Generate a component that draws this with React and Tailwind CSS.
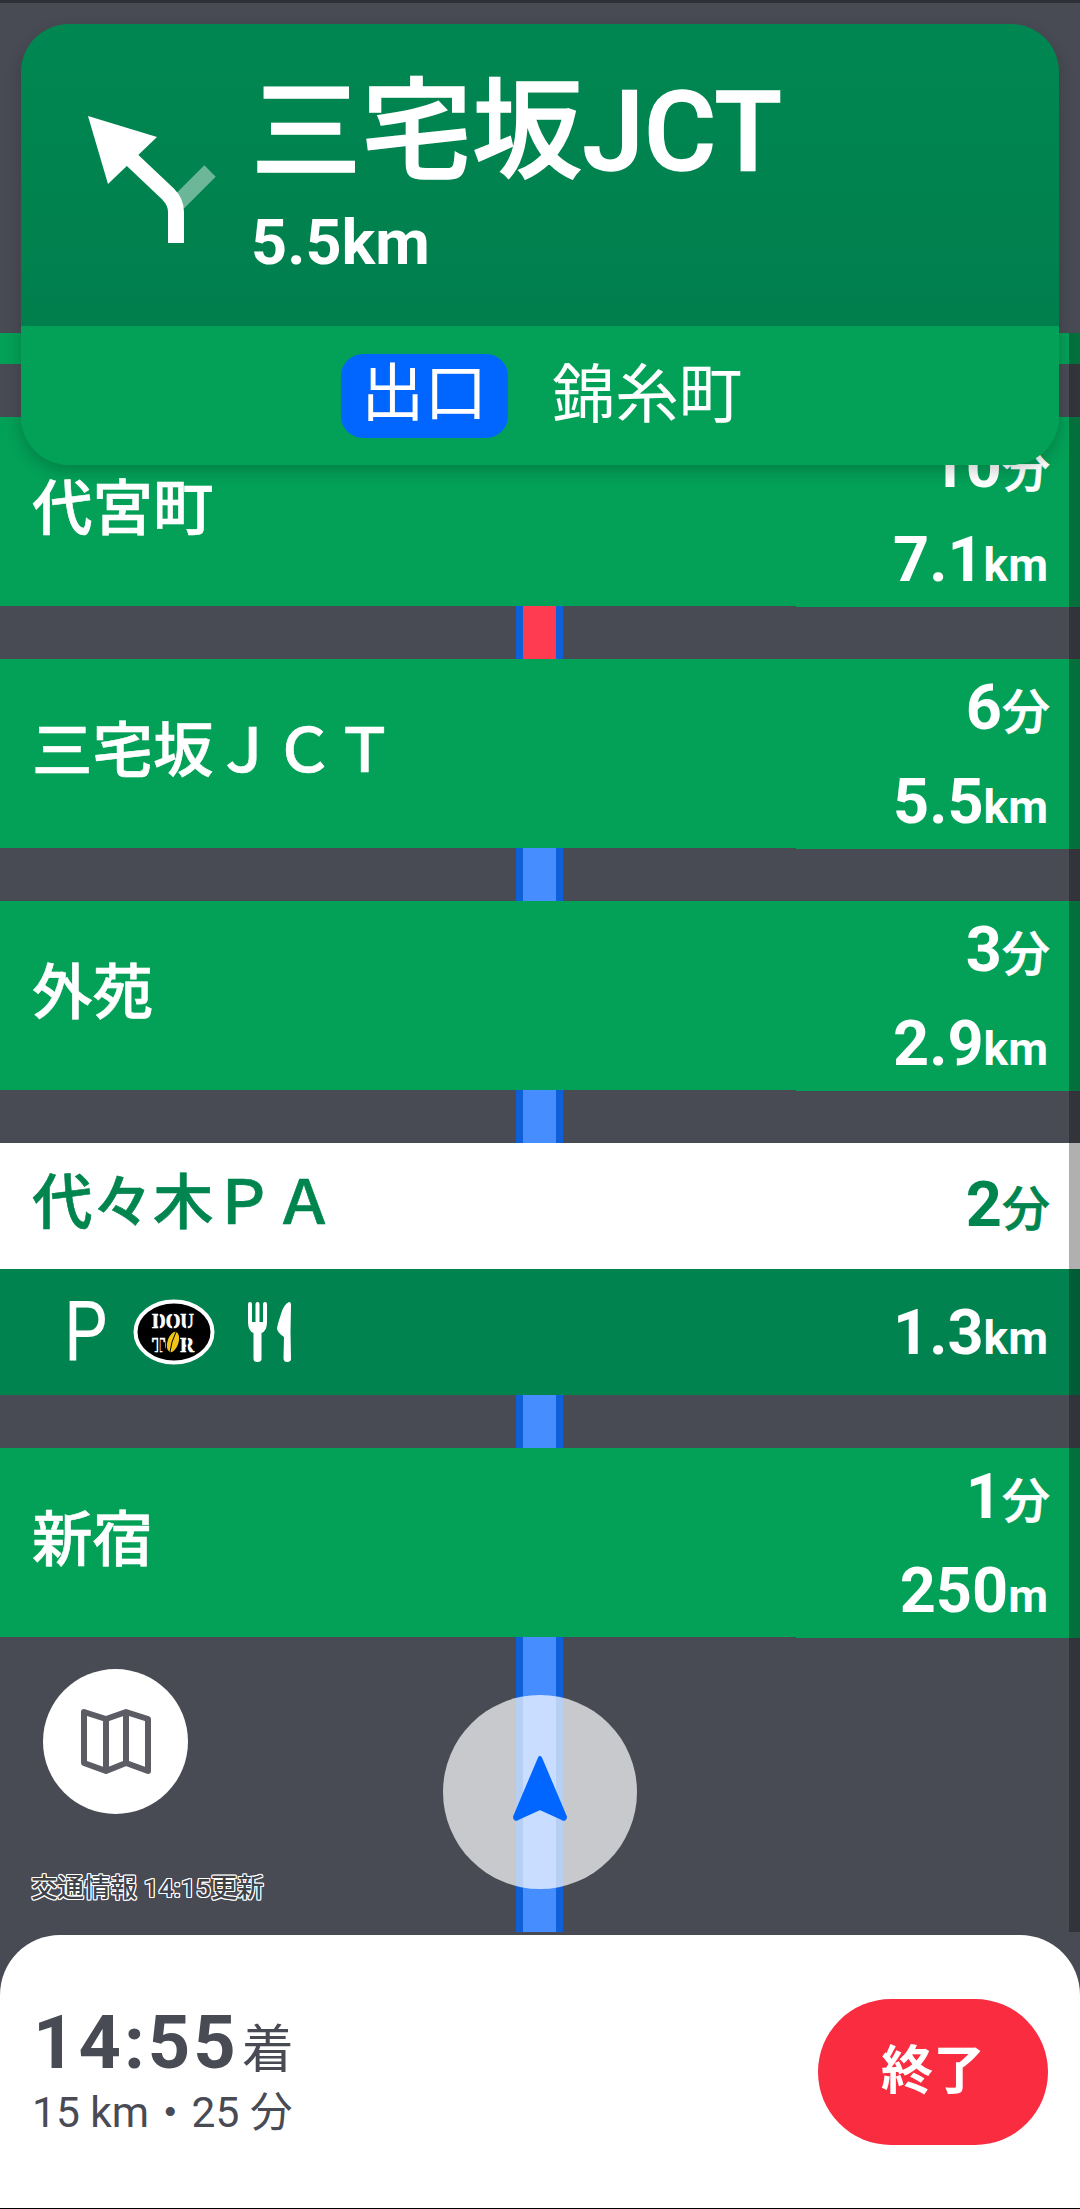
const FONT = 'font-[Roboto,"Noto_Sans_CJK_JP",sans-serif]';

function Road({ color = 'bg-[#468dff]', grow = false }) {
  return (
    <div className={`flex justify-center ${grow ? 'flex-1' : 'h-[53px]'}`}>
      <div className={`ml-[-1px] w-[47px] border-x-[7px] border-[#0f5fd8] ${color}`} />
    </div>
  );
}

function Amount({ value, unit, small }) {
  return (
    <div className="flex items-baseline justify-end leading-none text-white font-bold">
      <span className="text-[63px]">{value}</span>
      <span className={small ? 'mr-[-2px] text-[48px] font-medium [-webkit-text-stroke:0.6px_#fff]' : 'text-[46px]'}>{unit}</span>
    </div>
  );
}

function Row({ name, min, dist, unit = 'km' }) {
  return (
    <div className="flex h-[189px] shrink-0 bg-[#03a058]">
      <div className="flex flex-1 items-center pb-[3px] pl-[32px] text-[60.5px] font-medium leading-none text-white [-webkit-text-stroke:0.6px_#fff]">{name}</div>
      <div className="mb-[-1px] flex w-[284px] flex-col justify-between bg-[#03a058] pb-[16px] pr-[32px] pt-[17px]">
        <Amount value={min} unit="分" small />
        <Amount value={dist} unit={unit} />
      </div>
    </div>
  );
}

function TurnArrow() {
  return (
    <svg width="180" height="180" viewBox="60 90 180 180" className="shrink-0">
      <path d="M178 203 L210 171" stroke="#fff" strokeOpacity="0.42" strokeWidth="16" fill="none" />
      <path d="M176 243 V212 Q176 202 168 194 L130 158" stroke="#fff" strokeWidth="16" fill="none" />
      <path d="M88 116 L157 137 L108 184 Z" fill="#fff" />
    </svg>
  );
}

function DoutorLogo() {
  return (
    <svg width="82" height="66" viewBox="0 0 82 66">
      <ellipse cx="41" cy="33" rx="38.5" ry="30.5" fill="#000" stroke="#fff" strokeWidth="4" />
      <text x="19" y="29" fontFamily="Liberation Serif" fontWeight="700" fontSize="21" fill="#fff" stroke="#fff" strokeWidth="0.6" textLength="42" lengthAdjust="spacingAndGlyphs">DOU</text>
      <text x="19" y="53" fontFamily="Liberation Serif" fontWeight="700" fontSize="22" fill="#fff" stroke="#fff" strokeWidth="0.6" textLength="42" lengthAdjust="spacingAndGlyphs">TOR</text>
      <path d="M26 11 V54 M40 11 V30 M54 11 V54" stroke="#000" strokeWidth="1.5" />
      <rect x="33" y="32" width="14" height="22" fill="#000" />
      <ellipse cx="40" cy="43" rx="5.5" ry="10.5" fill="#f2c417" transform="rotate(18 40 43)" />
      <path d="M43 33 Q38 43 37 53" stroke="#000" strokeWidth="1" fill="none" />
    </svg>
  );
}

function Cutlery() {
  return (
    <svg width="43" height="61" viewBox="0 0 43 61" fill="#fff">
      <path d="M0 2 Q0 0 2 0 Q4 0 4 2 V20 H7.5 V2 Q7.5 0 9.5 0 Q11.5 0 11.5 2 V20 H15 V2 Q15 0 17 0 Q19 0 19 2 V20 Q19 29 13.5 31 L13.5 57 Q13.5 60 9.5 60 Q5.5 60 5.5 57 L5.5 31 Q0 29 0 20 Z" />
      <path d="M41 0 Q36 2 33 12 Q29 24 29 27 Q30 31 36 35 L35.5 56 Q35.5 60 39 60 Q43 60 43 57 L42.5 30 L43 3 Q43 0 41 0 Z" />
    </svg>
  );
}

export default function App() {
  return (
    <div className={`relative flex h-[2209px] w-[1080px] flex-col overflow-hidden bg-[#494b54] ${FONT}`}>
      <div className="h-[3px] shrink-0 bg-[#2f3037]" />

      {/* route list */}
      <div className="relative mt-[330px] flex h-[1599px] shrink-0 flex-col overflow-hidden">
        <div className="h-[31px] shrink-0 bg-[#03a058]" />
        <Road />
        <Row name="代宮町" min="10" dist="7.1" />
        <Road color="bg-[#ff3b52]" />
        <Row name="三宅坂ＪＣＴ" min="6" dist="5.5" />
        <Road />
        <Row name="外苑" min="3" dist="2.9" />
        <Road />
        <div className="flex h-[126px] shrink-0 items-center justify-between bg-white pb-[4px] pl-[32px] pr-[32px] text-[#00854f]">
          <span className="text-[60.5px] font-medium leading-none [-webkit-text-stroke:0.6px_#00854f]">代々木ＰＡ</span>
          <span className="flex items-baseline font-bold leading-none">
            <span className="text-[63px]">2</span>
            <span className="mr-[-2px] text-[48px] font-medium [-webkit-text-stroke:0.6px_#00854f]">分</span>
          </span>
        </div>
        <div className="flex h-[126px] shrink-0 items-center justify-between bg-[#00834f] pl-[64px] pr-[32px]">
          <div className="flex items-center">
            <span className="w-[36px] origin-left scale-x-[0.82] text-[84px] font-normal leading-none text-white">P</span>
            <div className="ml-[33px] flex"><DoutorLogo /></div>
            <div className="ml-[33px] flex"><Cutlery /></div>
          </div>
          <Amount value="1.3" unit="km" />
        </div>
        <Road />
        <Row name="新宿" min="1" dist="250" unit="m" />
        <Road grow />
        <div className="absolute bottom-0 right-0 top-0 w-[11px] bg-black/30" />
        <div className="absolute right-0 top-[810px] h-[126px] w-[11px] bg-[#b0b0b0]" />
      </div>

      {/* bottom sheet */}
      <div className="mt-[3px] flex h-[273px] shrink-0 items-center justify-between rounded-t-[60px] bg-white pl-[33px] pr-[32px] text-[#494b54]">
        <div className="mb-[3px] flex flex-col">
          <div className="flex items-baseline leading-none">
            <span className="text-[74px] font-bold tracking-[3px]">14:55</span>
            <span className="ml-[3px] text-[52px]">着</span>
          </div>
          <span className="ml-[-1px] mt-[12px] text-[42.5px] leading-none">15 km・25 分</span>
        </div>
        <button className="flex h-[146px] w-[230px] items-center justify-center rounded-full bg-[#f92c40] text-[52px] font-bold text-white">終了</button>
      </div>
      <div className="h-px shrink-0 bg-black" />

      {/* guidance card */}
      <div className="absolute left-[21px] top-[24px] flex h-[441px] w-[1038px] flex-col overflow-hidden rounded-[48px] shadow-[0_6px_16px_rgba(0,0,0,0.2)]">
        <div className="flex h-[302px] bg-gradient-to-b from-[#008751] to-[#007f4d] pl-[39px] pt-[66px]">
          <div><TurnArrow /></div>
          <div className="ml-[11px] mt-[-23px] flex flex-col text-white">
            <span className="text-[110.5px] font-medium leading-[130px] [-webkit-text-stroke:1.5px_#fff]">三宅坂JCT</span>
            <span className="mt-[14px] text-[63px] font-bold leading-none">5.5km</span>
          </div>
        </div>
        <div className="flex flex-1 items-center justify-center gap-[44px] bg-[#03a058] pl-[3px] text-white">
          <span className="flex h-[84px] w-[167px] items-center justify-center rounded-[22px] bg-[#0066ff] pb-[4px] text-[63px] leading-none">出口</span>
          <span className="text-[63.5px] leading-none">錦糸町</span>
        </div>
      </div>

      {/* floating map controls */}
      <button className="absolute left-[43px] top-[1669px] flex h-[145px] w-[145px] items-center justify-center rounded-full bg-white">
        <svg width="70" height="65" viewBox="0 0 70 65" fill="none" stroke="#5c5c64" strokeWidth="6" strokeLinejoin="round">
          <path d="M3 3 L25 10 L45 3 L67 10 V62 L45 54 L25 62 L3 54 Z M25 10 V62 M45 3 V54" />
        </svg>
      </button>
      <span className="absolute left-[31px] top-[1871px] text-[26.5px] font-medium leading-[34px] text-[#3f4148] [text-shadow:1px_1px_0_#fff,-1px_-1px_0_#fff,1px_-1px_0_#fff,-1px_1px_0_#fff,1px_0_0_#fff,-1px_0_0_#fff,0_1px_0_#fff,0_-1px_0_#fff]">交通情報 14:15更新</span>
      <div className="absolute left-[443px] top-[1695px] flex h-[194px] w-[194px] items-center justify-center rounded-full bg-white/70">
        <svg className="mb-[6px]" width="56" height="68" viewBox="0 0 56 68" fill="#0066ff" stroke="#0066ff" strokeWidth="4" strokeLinejoin="round">
          <path d="M28 3 L53 62 Q53 65 50 63 L28 53 L6 63 Q3 65 3 62 Z" />
        </svg>
      </div>
    </div>
  );
}
